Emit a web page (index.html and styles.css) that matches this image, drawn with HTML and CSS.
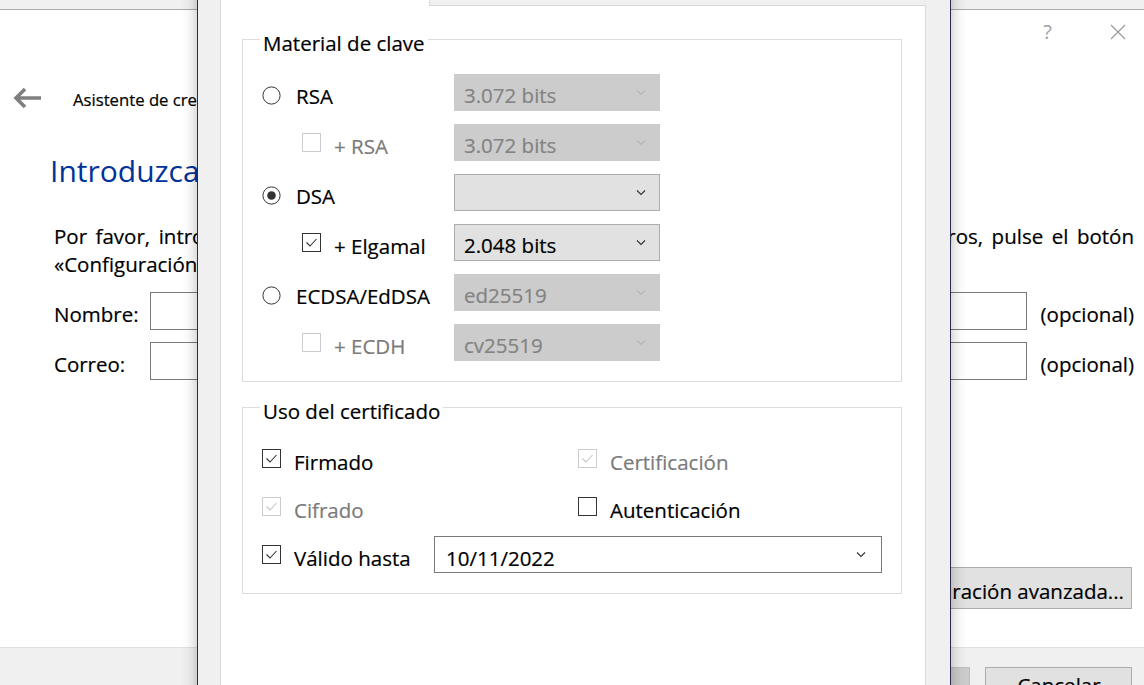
FILE: index.html
```html
<!DOCTYPE html>
<html lang="es">
<head>
<meta charset="utf-8">
<title>Configuración avanzada</title>
<link rel="stylesheet" href="styles.css">
</head>
<body>
<div class="wizard">
  <div class="topstrip"></div>
  <div class="wiz-controls">
    <span class="help">?</span>
    <svg class="close" width="16" height="16" viewBox="0 0 16 16"><path d="M1 1 L15 15 M15 1 L1 15" stroke="#9a9a9a" stroke-width="1.2" fill="none"/></svg>
  </div>
  <div class="wiz-header">
    <svg class="back" width="28" height="22" viewBox="0 0 28 22"><path d="M3 11 H28 M12 2 L3 11 L12 20" stroke="#7f7f7f" stroke-width="3.6" fill="none" stroke-linejoin="miter"/></svg>
    <span class="wiz-caption">Asistente de creación de par de claves</span>
  </div>
  <div class="wiz-body">
    <h1 class="wiz-title">Introduzca los detalles</h1>
    <p class="wiz-text"><span class="wrap-line">Por favor, introduzca abajo sus datos personales. Si desea más control sobre los parámetros, pulse el botón</span>«Configuración avanzada...».</p>
    <div class="form-row"><span class="form-label">Nombre:</span><span class="input"></span><span class="opt-note">(opcional)</span></div>
    <div class="form-row"><span class="form-label">Correo:</span><span class="input"></span><span class="opt-note">(opcional)</span></div>
    <div class="adv-row"><span class="btn">Configuración avanzada...</span></div>
  </div>
  <div class="wiz-footer">
    <span class="btn fbtn disabled">Crear</span>
    <span class="btn fbtn">Cancelar</span>
  </div>
</div>

<div class="dialog">
  <div class="tabbar"><div class="tab"></div></div>
  <div class="pane">
    <fieldset class="group">
      <legend>Material de clave</legend>
      <div class="keygrid">
        <div class="opt"><svg class="box radio" width="19" height="19" viewBox="0 0 19 19"><circle cx="9.5" cy="9.5" r="8.6" fill="#fff" stroke="#333" stroke-width="1"/></svg><span class="lbl lbl-r">RSA</span></div>
        <div class="combo off"><span class="ctext">3.072 bits</span><svg class="chev" width="10" height="6" viewBox="0 0 10 6"><path d="M1 0.5 L5 4.5 L9 0.5" fill="none" stroke-width="1.1"/></svg></div>

        <div class="opt sub"><svg class="box" width="19" height="19" viewBox="0 0 19 19"><rect x="0.5" y="0.5" width="18" height="18" fill="#fff" stroke="#cccccc"/></svg><span class="lbl off">+ RSA</span></div>
        <div class="combo off"><span class="ctext">3.072 bits</span><svg class="chev" width="10" height="6" viewBox="0 0 10 6"><path d="M1 0.5 L5 4.5 L9 0.5" fill="none" stroke-width="1.1"/></svg></div>

        <div class="opt"><svg class="box radio" width="19" height="19" viewBox="0 0 19 19"><circle cx="9.5" cy="9.5" r="8.6" fill="#fff" stroke="#333" stroke-width="1"/><circle cx="9.5" cy="9.5" r="4.3" fill="#333"/></svg><span class="lbl lbl-r">DSA</span></div>
        <div class="combo"><span class="ctext"></span><svg class="chev" width="10" height="6" viewBox="0 0 10 6"><path d="M1 0.5 L5 4.5 L9 0.5" fill="none" stroke-width="1.1"/></svg></div>

        <div class="opt sub"><svg class="box" width="19" height="19" viewBox="0 0 19 19"><rect x="0.5" y="0.5" width="18" height="18" fill="#fff" stroke="#333"/><path d="M4.5 9.5 L8 13 L14.5 6" fill="none" stroke="#333" stroke-width="1.1"/></svg><span class="lbl">+ Elgamal</span></div>
        <div class="combo"><span class="ctext">2.048 bits</span><svg class="chev" width="10" height="6" viewBox="0 0 10 6"><path d="M1 0.5 L5 4.5 L9 0.5" fill="none" stroke-width="1.1"/></svg></div>

        <div class="opt"><svg class="box radio" width="19" height="19" viewBox="0 0 19 19"><circle cx="9.5" cy="9.5" r="8.6" fill="#fff" stroke="#333" stroke-width="1"/></svg><span class="lbl lbl-r">ECDSA/EdDSA</span></div>
        <div class="combo off"><span class="ctext">ed25519</span><svg class="chev" width="10" height="6" viewBox="0 0 10 6"><path d="M1 0.5 L5 4.5 L9 0.5" fill="none" stroke-width="1.1"/></svg></div>

        <div class="opt sub"><svg class="box" width="19" height="19" viewBox="0 0 19 19"><rect x="0.5" y="0.5" width="18" height="18" fill="#fff" stroke="#cccccc"/></svg><span class="lbl off">+ ECDH</span></div>
        <div class="combo off"><span class="ctext">cv25519</span><svg class="chev" width="10" height="6" viewBox="0 0 10 6"><path d="M1 0.5 L5 4.5 L9 0.5" fill="none" stroke-width="1.1"/></svg></div>
      </div>
    </fieldset>

    <fieldset class="group group2">
      <legend>Uso del certificado</legend>
      <div class="usegrid">
        <div class="chk"><svg class="box" width="19" height="19" viewBox="0 0 19 19"><rect x="0.5" y="0.5" width="18" height="18" fill="#fff" stroke="#333"/><path d="M4.5 9.5 L8 13 L14.5 6" fill="none" stroke="#333" stroke-width="1.1"/></svg><span class="lbl">Firmado</span></div>
        <div class="chk col2"><svg class="box" width="19" height="19" viewBox="0 0 19 19"><rect x="0.5" y="0.5" width="18" height="18" fill="#fff" stroke="#cccccc"/><path d="M4.5 9.5 L8 13 L14.5 6" fill="none" stroke="#c4c4c4" stroke-width="1.1"/></svg><span class="lbl off">Certificación</span></div>
        <div class="chk"><svg class="box" width="19" height="19" viewBox="0 0 19 19"><rect x="0.5" y="0.5" width="18" height="18" fill="#fff" stroke="#cccccc"/><path d="M4.5 9.5 L8 13 L14.5 6" fill="none" stroke="#c4c4c4" stroke-width="1.1"/></svg><span class="lbl off">Cifrado</span></div>
        <div class="chk col2"><svg class="box" width="19" height="19" viewBox="0 0 19 19"><rect x="0.5" y="0.5" width="18" height="18" fill="#fff" stroke="#333"/></svg><span class="lbl">Autenticación</span></div>
        <div class="valid-row">
          <div class="chk valid"><svg class="box" width="19" height="19" viewBox="0 0 19 19"><rect x="0.5" y="0.5" width="18" height="18" fill="#fff" stroke="#333"/><path d="M4.5 9.5 L8 13 L14.5 6" fill="none" stroke="#333" stroke-width="1.1"/></svg><span class="lbl">Válido hasta</span></div>
          <div class="datefield"><span class="ctext">10/11/2022</span><svg class="chev" width="10" height="6" viewBox="0 0 10 6"><path d="M1 0.5 L5 4.5 L9 0.5" fill="none" stroke-width="1.1"/></svg></div>
        </div>
      </div>
    </fieldset>
  </div>
</div>
</body>
</html>
```

FILE: styles.css
```css
* { box-sizing: border-box; }
html, body { margin: 0; padding: 0; }
body {
  width: 1144px;
  height: 685px;
  overflow: hidden;
  position: relative;
  background: #fff;
  color: #000;
  font-family: "Open Sans", "Noto Sans", sans-serif;
  font-size: 20.5px;
  -webkit-text-stroke: 0.2px currentColor;
}

/* ---------- background wizard ---------- */
.wizard {
  height: 685px;
  display: flex;
  flex-direction: column;
  background: #fff;
}
.topstrip {
  flex: none;
  height: 10px;
  background: #f0f0f0;
  border-bottom: 1px solid #a9a9a9;
}
.wiz-controls {
  flex: none;
  height: 44px;
  display: flex;
  justify-content: flex-end;
  align-items: center;
  padding-right: 18px;
}
.help {
  color: #a0a0a0;
  font-size: 20px;
  line-height: 24px;
  margin-right: 58px;
  -webkit-text-stroke: 0;
}
.wiz-header {
  flex: none;
  height: 30px;
  margin-top: 29px;
  display: flex;
  align-items: center;
  padding-left: 13px;
}
.back { flex: none; }
.wiz-caption {
  margin-left: 32px;
  font-size: 16.7px;
  line-height: 24px;
  padding-top: 4px;
}
.wiz-body {
  flex: none;
  padding: 0 10px 0 54px;
}
.wiz-title {
  margin: 38px 0 0 -4px;
  font-weight: normal;
  font-size: 30px;
  line-height: 40px;
  color: #003399;
  white-space: nowrap;
  -webkit-text-stroke: 0;
}
.wiz-text {
  margin: 31px 0 0 0;
  line-height: 28px;
}
.wrap-line {
  display: block;
  white-space: nowrap;
  text-align: justify;
  text-align-last: justify;
}
.form-row {
  display: flex;
  align-items: center;
  height: 38px;
  margin-top: 14px;
}
.form-row + .form-row { margin-top: 12px; }
.form-label { width: 96px; flex: none; padding-top: 6px; }
.input {
  flex: 1;
  height: 38px;
  border: 1px solid #7a7a7a;
  background: #fff;
}
.opt-note { flex: none; margin-left: 14px; padding-top: 6px; }
.adv-row {
  display: flex;
  justify-content: flex-end;
  margin-top: 187px;
  padding-right: 2px;
}
.btn {
  display: inline-flex;
  align-items: center;
  justify-content: center;
  height: 42px;
  padding: 5px 7px 0 8px;
  background: #e1e1e1;
  border: 1px solid #adadad;
  white-space: nowrap;
}
.wiz-footer {
  margin-top: auto;
  height: 38px;
  background: #f0f0f0;
  border-top: 1px solid #dfdfdf;
  display: flex;
  justify-content: flex-end;
  align-items: flex-start;
  gap: 15px;
  padding: 19px 12px 0 0;
  overflow: hidden;
}
.fbtn {
  width: 147px;
  flex: none;
  align-items: flex-start;
  padding-top: 5px;
  line-height: 24px;
}
.fbtn.disabled { background: #cccccc; border-color: #bfbfbf; color: #838383; }

/* ---------- dialog ---------- */
.dialog {
  position: absolute;
  left: 197px;
  top: -40px;
  width: 754px;
  height: 770px;
  background: #f0f0f0;
  border: 1px solid #2b2a4c;
  padding: 0 24px 0 22px;
  box-shadow: 0 0 14px rgba(0, 0, 0, 0.28);
  display: flex;
  flex-direction: column;
}
.tabbar {
  flex: none;
  height: 44px;
  display: flex;
  align-items: flex-end;
}
.tab {
  position: relative;
  z-index: 1;
  width: 210px;
  height: 30px;
  margin-bottom: -1px;
  background: #fff;
  border: 1px solid #d9d9d9;
  border-bottom: none;
}
.pane {
  flex: 1;
  background: #fff;
  border: 1px solid #d9d9d9;
  padding: 17px 23px 0 21px;
}
.group {
  margin: 0;
  padding: 18px 0 20px 0;
  border: 1px solid #dcdcdc;
  min-width: 0;
}
.group2 {
  margin-top: 9px;
  padding: 16px 0 20px 0;
}
.group legend {
  margin-left: 17px;
  padding: 7px 3px 0 3px;
  line-height: 26px;
}
.keygrid {
  display: grid;
  grid-template-columns: 211px 206px;
  grid-auto-rows: 37px;
  row-gap: 13px;
}
.opt, .chk {
  display: flex;
  align-items: center;
  padding-left: 19px;
}
.opt.sub { padding-left: 59px; }
.box { flex: none; display: block; }
.box.radio { margin-top: 6px; }
.lbl {
  padding-top: 7px;
  line-height: 24px;
  margin-left: 13px;
  white-space: nowrap;
}
.lbl-r { margin-left: 15px; }
.chk .lbl { margin-left: 13px; }
.chk.col2 { padding-left: 0; }
.chk.col2 .lbl { margin-left: 13px; }
.off { color: #7a7a7a; }

.combo {
  display: flex;
  align-items: center;
  background: #e1e1e1;
  border: 1px solid #adadad;
  padding-left: 9px;
}
.combo.off {
  background: #cccccc;
  border-color: #cccccc;
  color: #838383;
}
.ctext {
  padding-top: 4px;
  line-height: 24px;
  white-space: nowrap;
}
.chev {
  flex: none;
  margin-left: auto;
  margin-right: 13px;
  stroke: #333;
}
.combo.off .chev { stroke: #b5b5b5; }

.usegrid {
  display: grid;
  grid-template-columns: 335px 1fr;
  grid-auto-rows: 37px;
  row-gap: 11px;
}
.valid-row {
  grid-column: 1 / span 2;
  display: flex;
  align-items: stretch;
  padding-right: 19px;
}
.chk.valid { width: 191px; flex: none; }
.datefield {
  flex: 1;
  display: flex;
  align-items: center;
  border: 1px solid #7a7a7a;
  background: #fff;
  padding-left: 11px;
}
.datefield .ctext { padding-top: 6px; }
.datefield .chev { margin-right: 15px; }
```
